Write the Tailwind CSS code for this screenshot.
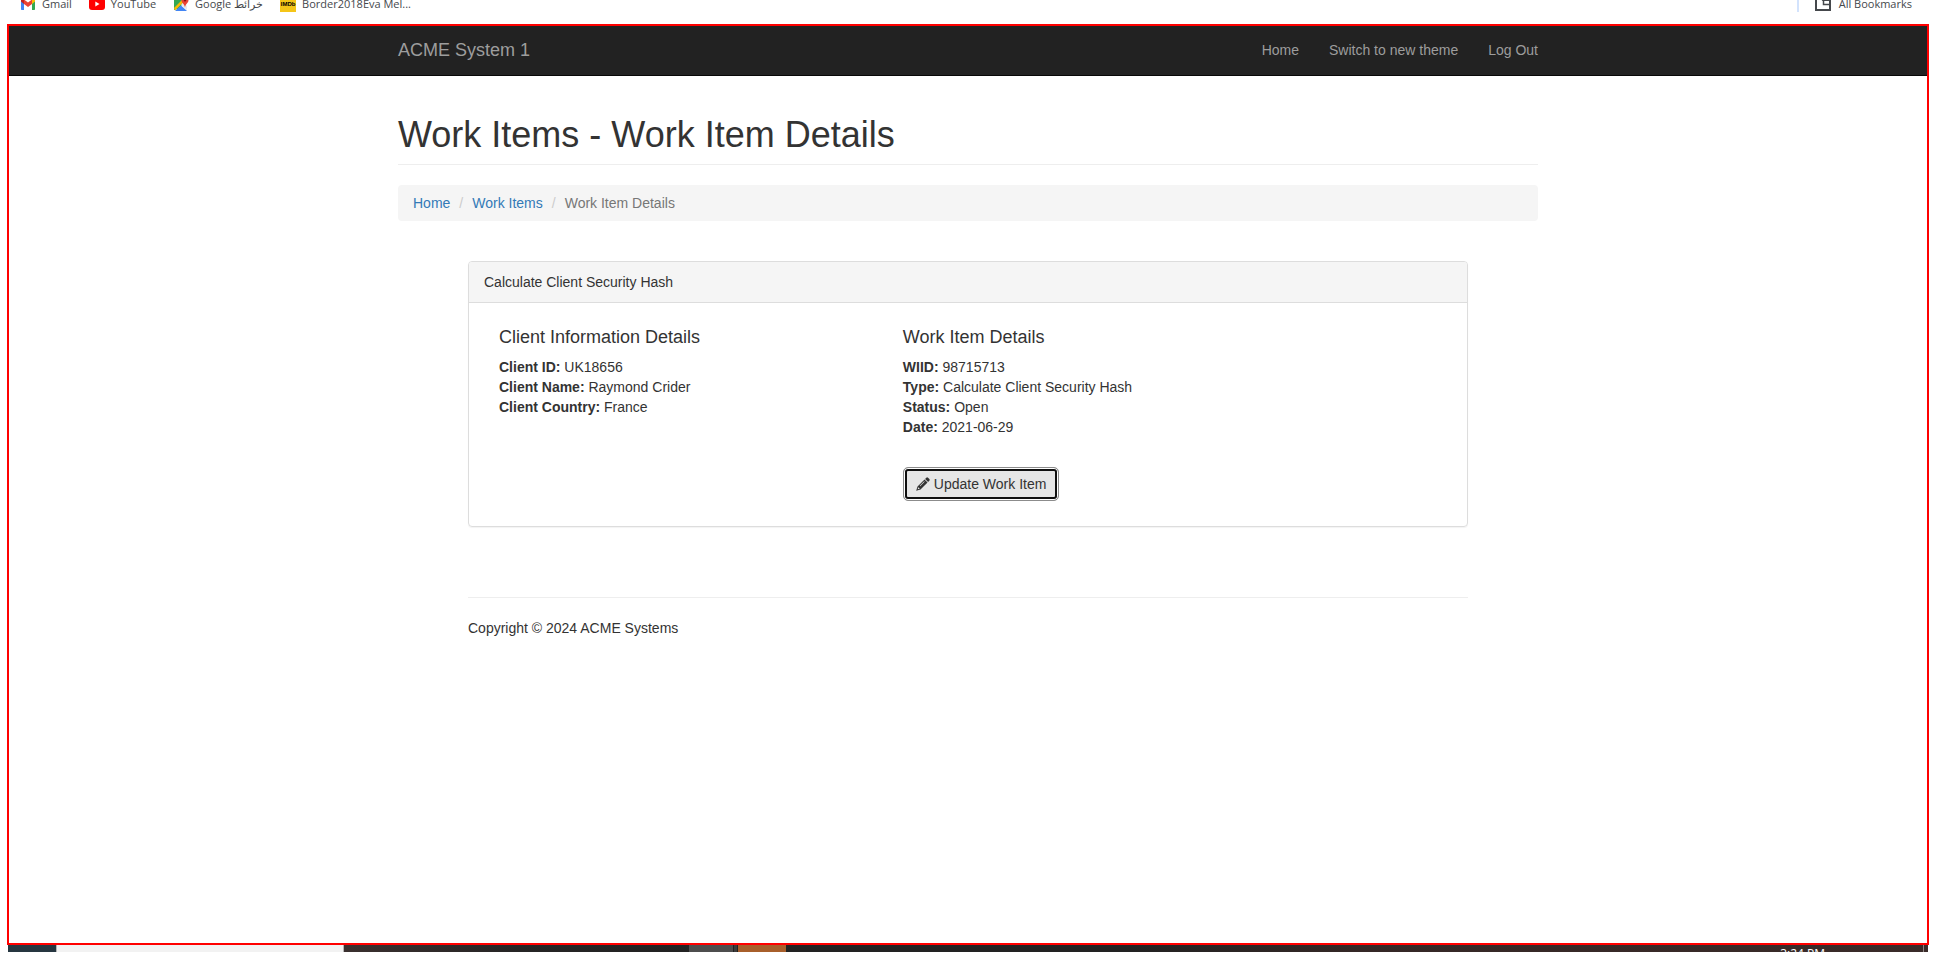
<!DOCTYPE html>
<html lang="en">
<head>
<meta charset="utf-8">
<title>ACME System 1 - Work Item Details</title>
<script src="https://cdn.jsdelivr.net/npm/@tailwindcss/browser@4"></script>
</head>
<body class="flex min-h-screen flex-col bg-white pb-[17px] font-['Liberation_Sans',Arial,sans-serif] text-sm text-[#333]">

<!-- Bookmarks bar -->
<div class="flex h-6 items-start justify-between overflow-hidden pl-5 pr-[24px] font-['Open_Sans','Noto_Sans',sans-serif] text-[11px] leading-4 text-[#45484c]">
  <div class="-mt-1 flex h-4 items-center">
    <a href="#" class="flex items-center gap-1.5">
      <svg class="size-4" viewBox="0 0 16 16"><path fill="#4285f4" d="M1 4.5V13c0 .6.4 1 1 1h2V7z"/><path fill="#34a853" d="M12 7v7h2c.6 0 1-.4 1-1V4.500z"/><path fill="#ea4335" d="M4 3.500 8 6.500l4-3V8l-4 3-4-3z"/><path fill="#c5221f" d="M1 4.200C1 2.500 2.800 2 4 3v5L1 5.500z"/><path fill="#fbbc04" d="M15 4.200C15 2.500 13.200 2 12 3v5l3-2.500z"/></svg>
      <span>Gmail</span>
    </a>
    <a href="#" class="ml-[17px] flex items-center gap-1.5">
      <svg class="size-4" viewBox="0 0 16 16"><rect y="2" width="16" height="12" rx="3" fill="#f00"/><path fill="#fff" d="m6.300 5.500 4.200 2.500-4.200 2.500z"/></svg>
      <span>YouTube</span>
    </a>
    <a href="#" class="ml-[17px] flex items-center gap-1.5">
      <svg class="size-4" viewBox="0 0 16 16"><path fill="#34a853" d="M1 1h9v7L5 13 1 14z"/><path fill="#e8eaed" d="M10 6l4 4v4L8 9z"/><path fill="#4285f4" d="M2 15 8 9.500l6 5.500z"/><path fill="#fbbc04" d="M1 12 9 4l1.500 2L2 14.500z"/><path fill="#ea4335" d="M12 1c-2 0-3.500 1.400-3.500 3.300C8.500 7 11.500 8 12 11.500 12.500 8 15.500 7 15.500 4.300 15.500 2.400 14 1 12 1z"/><circle cx="12" cy="4.300" r="1.200" fill="#811"/></svg>
      <span>Google <bdi lang="ar">خرائط</bdi></span>
    </a>
    <a href="#" class="ml-[17px] flex items-center gap-1.5">
      <span class="flex size-4 items-center justify-center bg-[#f5c518] font-['Liberation_Sans',Arial,sans-serif] text-[6px] font-black text-black">IMDb</span>
      <span>Border2018Eva Mel...</span>
    </a>
  </div>
  <div class="-mt-1 flex h-4 items-center">
    <div class="mr-4 h-4 w-0.5 bg-[#d3e3fd]"></div>
    <a href="#" class="flex items-center gap-2">
      <svg class="size-4" viewBox="0 0 16 16" fill="none" stroke="#45484c" stroke-width="2"><path d="M1 2h5l2 2h7v10H1z"/><path d="M8.500 4v4.500H15" stroke-width="1.500"/></svg>
      <span>All Bookmarks</span>
    </a>
  </div>
</div>

<!-- Page viewport -->
<div class="mx-[7px] flex grow flex-col border-2 border-[#f00]">
  <nav class="border-b border-[#080808] bg-[#222] pt-3.5 pb-[15px] leading-5 text-[#9d9d9d]">
    <div class="mx-auto flex max-w-[1140px] justify-between">
      <a href="#" class="text-lg leading-5">ACME System 1</a>
      <div class="flex gap-[30px]">
        <a href="#">Home</a>
        <a href="#">Switch to new theme</a>
        <a href="#">Log Out</a>
      </div>
    </div>
  </nav>

  <main class="mx-auto w-full max-w-[1140px] pt-[39px] leading-5">
    <h1 class="border-b border-[#eee] pb-[9px] text-4xl leading-10">Work Items - Work Item Details</h1>
    <ol class="mt-5 flex rounded bg-[#f5f5f5] px-[15px] py-2">
      <li><a href="#" class="text-[#337ab7]">Home</a></li>
      <li class="before:px-[9px] before:text-[#ccc] before:content-['/']"><a href="#" class="text-[#337ab7]">Work Items</a></li>
      <li class="text-[#777] before:px-[9px] before:text-[#ccc] before:content-['/']">Work Item Details</li>
    </ol>

    <div class="mx-auto mt-10 max-w-[1000px]">
      <section class="rounded border border-[#ddd] shadow-[0_1px_1px_rgba(0,0,0,0.05)]">
        <div class="rounded-t-[3px] border-b border-[#ddd] bg-[#f5f5f5] px-[15px] py-2.5">Calculate Client Security Hash</div>
        <div class="grid grid-cols-[5fr_7fr] px-[30px] pt-6 pb-[25px]">
          <div>
            <h4 class="mb-2.5 text-lg leading-5">Client Information Details</h4>
            <p><b>Client ID:</b> UK18656</p>
            <p><b>Client Name:</b> Raymond Crider</p>
            <p><b>Client Country:</b> France</p>
          </div>
          <div class="pl-[13px]">
            <h4 class="mb-2.5 text-lg leading-5">Work Item Details</h4>
            <p><b>WIID:</b> 98715713</p>
            <p><b>Type:</b> Calculate Client Security Hash</p>
            <p><b>Status:</b> Open</p>
            <p><b>Date:</b> 2021-06-29</p>
            <button type="button" class="mt-[30px] flex h-[34px] items-center gap-1 rounded-[5px] border border-[#8c8c8c] bg-[#e6e6e6] px-3 whitespace-nowrap shadow-[inset_0_0_0_1px_#fff,inset_0_0_0_3px_#101010]">
              <svg class="size-3.5" viewBox="0 0 14 14" fill="#333"><path d="M10.300.700a1.200 1.200 0 0 1 1.700 0l1.300 1.300a1.200 1.200 0 0 1 0 1.700l-1.200 1.200-3-3z"/><path fill-rule="evenodd" d="M8.500 2.500l3 3-7 7L.2 13.800l1.300-4.300zM2.300 10.200l-.6 2.100 2.100-.6zM8.200 4.300 3.700 8.800l.4.400 4.500-4.500z"/></svg>
              Update Work Item
            </button>
          </div>
        </div>
      </section>
      <footer class="mt-[70px] border-t border-[#eee] pt-5">Copyright © 2024 ACME Systems</footer>
    </div>
  </main>
</div>

<!-- Taskbar -->
<div class="mx-2 flex h-[7px] overflow-hidden bg-[#222]">
  <div class="w-12 bg-[#263640]"></div>
  <div class="w-72 border-x border-[#b5b5b5] bg-[#f2f2f2]"></div>
  <div class="w-[345px] bg-linear-to-r from-[#3b302f] via-[#262525] to-[#222]"></div>
  <div class="w-11 bg-[#4e4e4e]"></div>
  <div class="w-[5px] border-x border-[#222] bg-[#3c3c3c]"></div>
  <div class="w-12 bg-[#a85f2b]"></div>
  <div class="flex grow justify-end bg-linear-to-r from-[#222] from-30% via-[#352826] via-50% to-[#3a2b29]">
    <span class="mr-[98px] pt-px font-['Open_Sans','Noto_Sans',sans-serif] text-xs leading-4 text-white">3:24 PM</span>
    <span class="mr-1 w-px bg-[#8f8583]"></span>
  </div>
</div>
</body>
</html>
